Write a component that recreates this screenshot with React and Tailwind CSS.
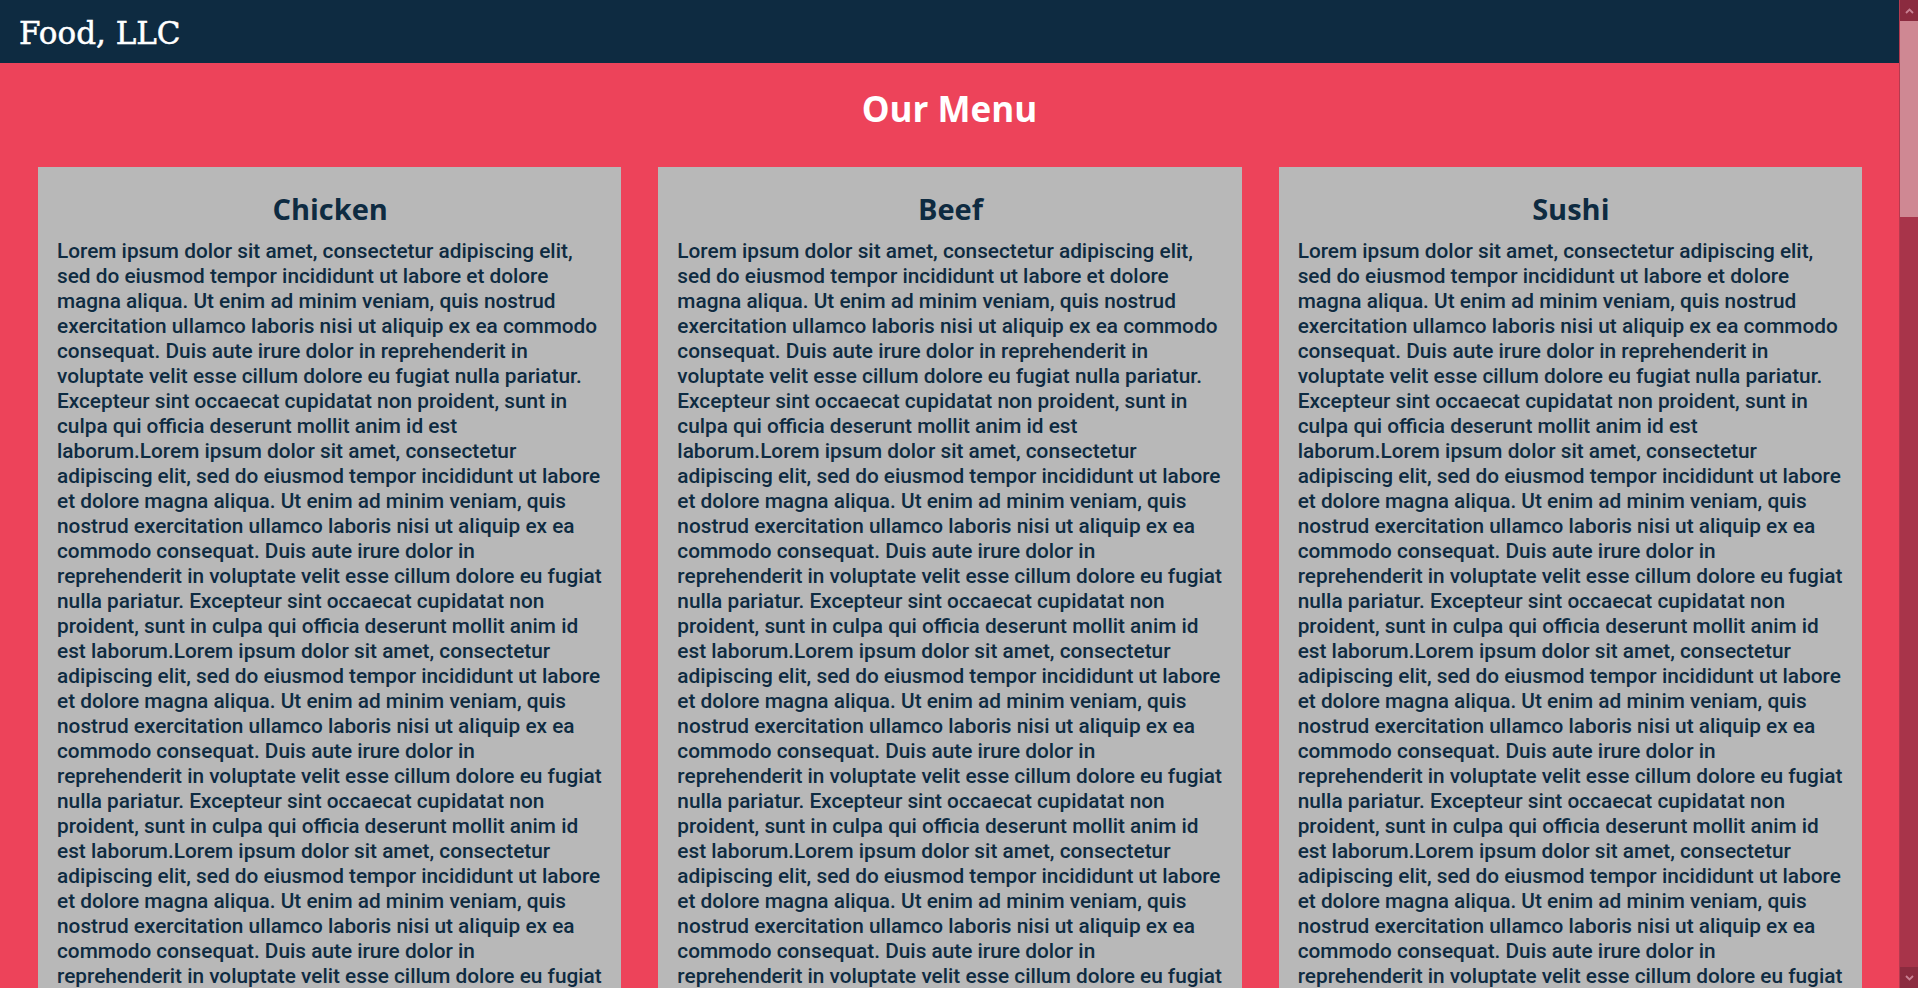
const LOREM =
  'Lorem ipsum dolor sit amet, consectetur adipiscing elit, sed do eiusmod tempor incididunt ut labore et dolore magna aliqua. Ut enim ad minim veniam, quis nostrud exercitation ullamco laboris nisi ut aliquip ex ea commodo consequat. Duis aute irure dolor in reprehenderit in voluptate velit esse cillum dolore eu fugiat nulla pariatur. Excepteur sint occaecat cupidatat non proident, sunt in culpa qui officia deserunt mollit anim id est laborum.'

const BODY = Array(6).fill(LOREM).join('')

const dishes = ['Chicken', 'Beef', 'Sushi']

function MenuCard({ title }) {
  return (
    <section className="bg-[#b8b8b8] pl-[19px] pr-[18px] pt-[27px] pb-[20px] text-[#0e2b41]">
      <h3 className="text-center font-['Open_Sans',sans-serif] text-[29px] font-bold leading-none">{title}</h3>
      <p className="mt-[16px] font-['Roboto',sans-serif] text-[20.8px] font-medium leading-[25px]">{BODY}</p>
    </section>
  )
}

function Chevron({ up }) {
  return (
    <svg width="9" height="6" viewBox="0 0 9 6" className="text-[#c98193]">
      <path d={up ? 'M1 5 L4.5 1.5 L8 5' : 'M1 1 L4.5 4.5 L8 1'} fill="none" stroke="currentColor" strokeWidth="1.8" />
    </svg>
  )
}

function Scrollbar() {
  return (
    <aside className="flex w-[19px] shrink-0 flex-col border-l border-[#b53a4f] bg-[#a8344a]">
      <div className="flex h-[21px] items-center justify-center bg-[#8b2b3f]">
        <Chevron up />
      </div>
      <div className="h-[196px] bg-[#cf8893]" />
      <div className="flex-1" />
      <div className="flex h-[21px] items-center justify-center bg-[#8b2b3f]">
        <Chevron />
      </div>
    </aside>
  )
}

export default function App() {
  return (
    <div className="flex h-screen overflow-hidden bg-[#ed435a]">
      <div className="min-w-0 flex-1 overflow-hidden">
        <header className="h-[63px] bg-[#0e2b41] px-[19px] pt-[18px]">
          <h1 className="font-['DejaVu_Serif',serif] text-[31px] leading-none text-white [-webkit-text-stroke:0.5px_white]">
            Food, LLC
          </h1>
        </header>
        <main className="pb-[40px]">
          <h2 className="mt-[28px] text-center font-['Open_Sans',sans-serif] text-[35px] font-bold leading-none text-white">
            Our Menu
          </h2>
          <div className="mt-[41px] grid grid-cols-3 gap-[37px] pl-[38px] pr-[37px]">
            {dishes.map((dish) => (
              <MenuCard key={dish} title={dish} />
            ))}
          </div>
        </main>
      </div>
      <Scrollbar />
    </div>
  )
}
